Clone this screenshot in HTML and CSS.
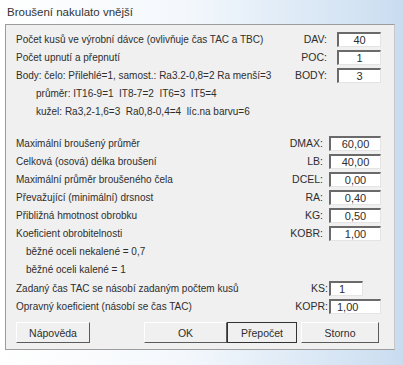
FILE: index.html
```html
<!DOCTYPE html>
<html lang="cs">
<head>
    <meta charset="UTF-8">
    <title>Broušení nakulato vnější</title>
    <link rel="stylesheet" href="styles.css">
</head>
<body>

<div class="window">
    <div class="titlebar">Broušení nakulato vnější</div>

    <div class="client">
        <div class="group">
            <div class="row">
                <span class="text">Počet kusů ve výrobní dávce (ovlivňuje čas TAC a TBC)</span>
                <span class="code code-top">DAV:</span>
                <span class="box box-top">40</span>
            </div>
            <div class="row">
                <span class="text">Počet upnutí a přepnutí</span>
                <span class="code code-top">POC:</span>
                <span class="box box-top">1</span>
            </div>
            <div class="row">
                <span class="text">Body: čelo: Přilehlé=1, samost.: Ra3.2-0,8=2 Ra menší=3</span>
                <span class="code code-top">BODY:</span>
                <span class="box box-top">3</span>
            </div>
            <div class="row indent2">průměr: IT16-9=1&nbsp; IT8-7=2&nbsp; IT6=3&nbsp; IT5=4</div>
            <div class="row indent2">kužel: Ra3,2-1,6=3&nbsp; Ra0,8-0,4=4&nbsp; líc.na barvu=6</div>
        </div>

        <div class="group group-second">
            <div class="row">
                <span class="text">Maximální broušený průměr</span>
                <span class="code">DMAX:</span>
                <span class="box">60,00</span>
            </div>
            <div class="row">
                <span class="text">Celková (osová) délka broušení</span>
                <span class="code">LB:</span>
                <span class="box">40,00</span>
            </div>
            <div class="row">
                <span class="text">Maximální průměr broušeného čela</span>
                <span class="code">DCEL:</span>
                <span class="box">0,00</span>
            </div>
            <div class="row">
                <span class="text">Převažující (minimální) drsnost</span>
                <span class="code">RA:</span>
                <span class="box">0,40</span>
            </div>
            <div class="row">
                <span class="text">Přibližná hmotnost obrobku</span>
                <span class="code">KG:</span>
                <span class="box">0,50</span>
            </div>
            <div class="row">
                <span class="text">Koeficient obrobitelnosti</span>
                <span class="code">KOBR:</span>
                <span class="box">1,00</span>
            </div>
            <div class="row indent1 tall">běžné oceli nekalené = 0,7</div>
            <div class="row indent1 tall">běžné oceli kalené = 1</div>
            <div class="row">
                <span class="text">Zadaný čas TAC se násobí zadaným počtem kusů</span>
                <span class="code code-tight">KS:</span>
                <span class="box box-small">1</span>
            </div>
            <div class="row">
                <span class="text">Opravný koeficient (násobí se čas TAC)</span>
                <span class="code code-tight">KOPR:</span>
                <span class="box box-left">1,00</span>
            </div>
        </div>

        <div class="buttons">
            <button class="btn btn-help">Nápověda</button>
            <button class="btn btn-ok">OK</button>
            <button class="btn btn-default">Přepočet</button>
            <button class="btn btn-cancel">Storno</button>
        </div>
    </div>
</div>

</body>
</html>
```

FILE: styles.css
```css
html, body {
    margin: 0;
    height: 100%;
}
body {
    font-family: "Liberation Sans", Arial, sans-serif;
    font-size: 10px;
    color: #2e2e2e;
    background: linear-gradient(90deg, #ffffff 0%, #f4f8fc 45%, #d6e5f4 85%, #c9dcef 100%);
    overflow: hidden;
}
.window {
    padding: 0 8px 13px 5px;
}
.titlebar {
    height: 24px;
    line-height: 24px;
    padding-left: 2px;
    font-size: 11.5px;
    color: #333;
}
.client {
    background: #f0f0f0;
    border: 1px solid #9c9c9c;
    border-right-color: #c8c8c8;
    height: 326px;
    box-sizing: border-box;
    padding: 5px 13px 0 10px;
}
.row {
    display: flex;
    align-items: center;
    height: 18px;
    white-space: nowrap;
}
.text {
    flex: 1;
}
.indent2 {
    padding-left: 20px;
    height: 18.5px;
}
.indent1 {
    padding-left: 10px;
}
.tall {
    height: 18.5px;
}
.group-second {
    margin-top: 13px;
}
.code {
    margin-right: 6px;
    text-align: right;
    font-size: 10.5px;
}
.code-top {
    margin-right: 10px;
}
.code-tight {
    margin-right: 1px;
}
.box {
    width: 52px;
    height: 15px;
    box-sizing: border-box;
    background: #fff;
    border-top: 2px solid #6a6a6a;
    border-left: 2px solid #6a6a6a;
    border-right: 1px solid #e4e4e4;
    border-bottom: 1px solid #e4e4e4;
    text-align: center;
    line-height: 12px;
    font-size: 11px;
}
.box-top {
    width: 44px;
}
.box-small {
    width: 34px;
    text-align: left;
    padding-left: 8px;
    margin-right: 18px;
}
.box-left {
    text-align: left;
    padding-left: 6px;
}
.buttons {
    display: flex;
    align-items: center;
    margin-top: 7px;
}
.btn {
    font: inherit;
    font-size: 10.5px;
    color: #2e2e2e;
    height: 21px;
    box-sizing: border-box;
    background: #f0f0f0;
    border: 1px solid;
    border-color: #ffffff #5a5a5a #5a5a5a #ffffff;
    padding: 0;
}
.btn-help {
    width: 74px;
}
.btn-ok {
    width: 83px;
    margin-left: 54px;
}
.btn-default {
    width: 70px;
    border-color: #333;
}
.btn-cancel {
    width: 78px;
    margin-left: 4px;
}
```
